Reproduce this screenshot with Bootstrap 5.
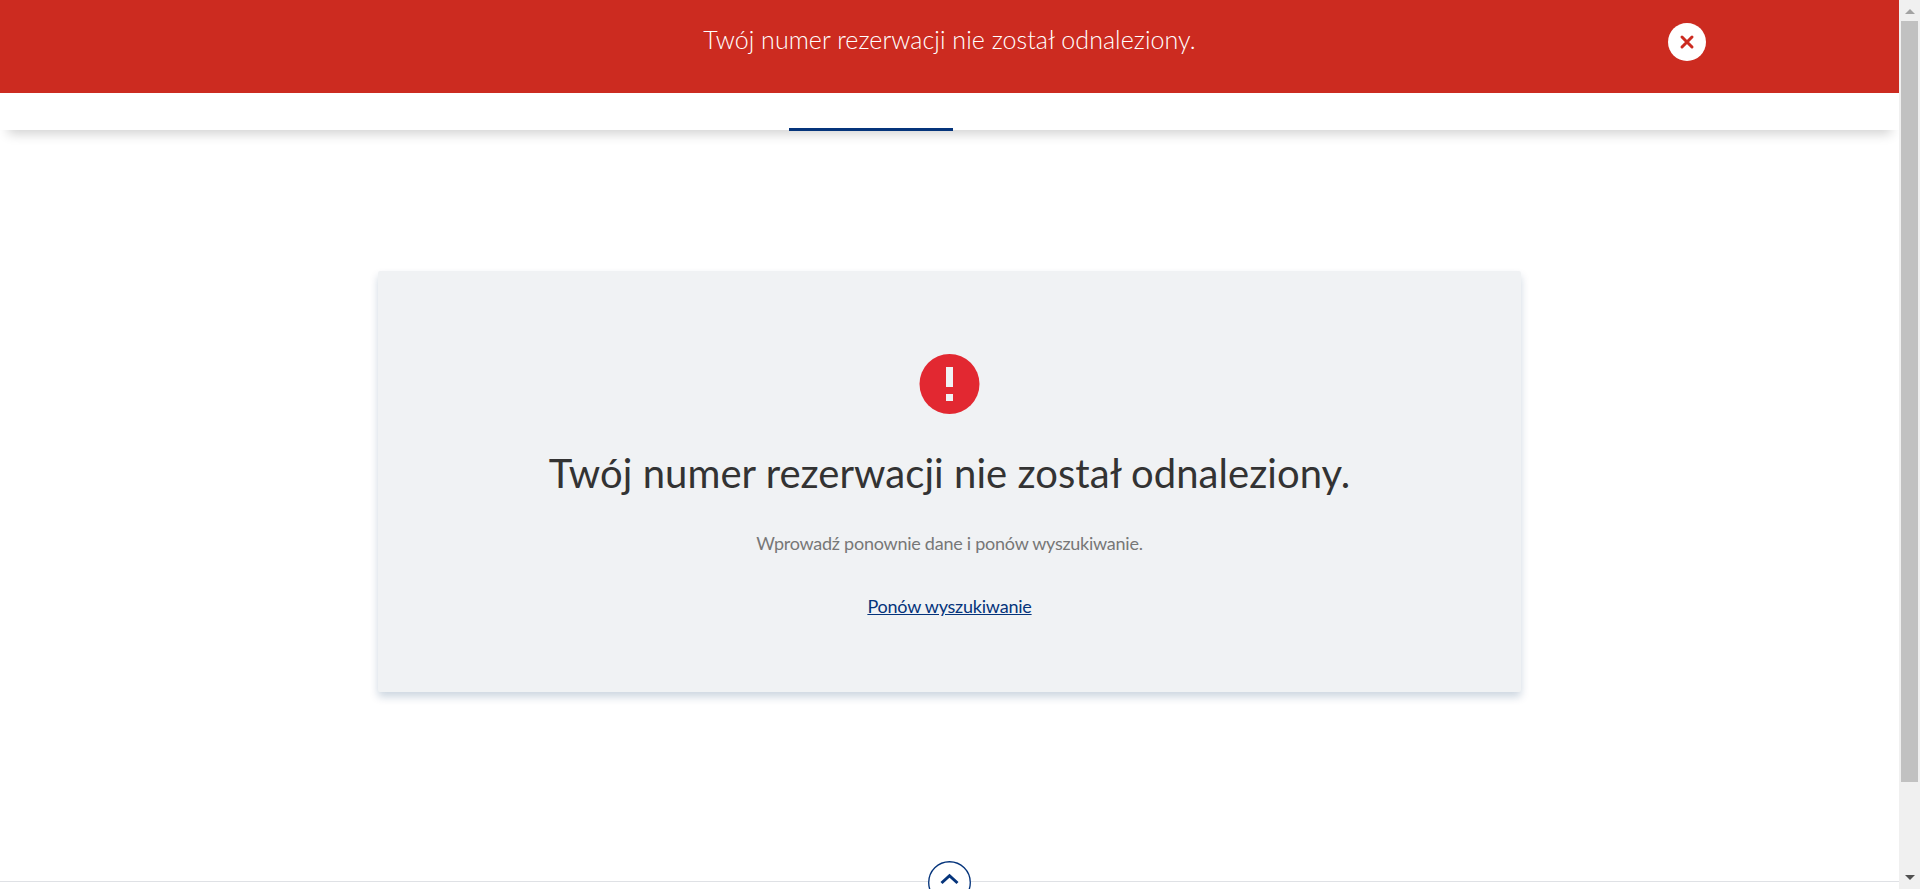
<!DOCTYPE html>
<html lang="pl">
<head>
<meta charset="utf-8">
<meta name="viewport" content="width=device-width, initial-scale=1">
<title>Rezerwacja</title>
<link href="https://cdn.jsdelivr.net/npm/bootstrap@5.3.0/dist/css/bootstrap.min.css" rel="stylesheet">
<style>
  body { font-family: Lato, "Liberation Sans", sans-serif; background: #fff; }
  .alert-bar { height: 93px; background: #cc2b20; color: #fff; padding-top: 21px; }
  .alert-text { font-size: 25px; line-height: 36px; font-weight: 300; letter-spacing: .05px; }
  .close-btn { width: 38px; height: 38px; top: 23px; right: 193px; }
  .tabs-bar { height: 37px; box-shadow: 0 12px 12px -8px rgba(0,0,0,.18); padding-right: 157px; }
  .tab-line { width: 164px; height: 3px; margin-bottom: -1px; background: #05347b; }
  .error-card { width: 1143px; height: 421px; margin-top: 141px; padding-top: 83px; background: #f0f2f4; border-radius: 2px; box-shadow: 0 5px 9px rgba(5,52,100,.2); }
  .error-title { font-size: 40px; line-height: 48px; color: #333; margin: 35px 0 0; font-weight: 400; letter-spacing: .05px; }
  .error-hint { font-size: 18px; line-height: 24px; color: #777; margin: 34px 0 0; letter-spacing: -.25px; }
  .retry { font-size: 18px; line-height: 24px; color: #05347b; margin-top: 39px; letter-spacing: -.22px; }
  .page-foot { height: 8px; border-top: 1px solid #dfe1e5; }
  .to-top { width: 43px; height: 43px; top: -21px; left: 928px; }
  .scroll-rail { width: 21px; background: #f0f0f0; padding: 9px 0; }
  .scroll-thumb { width: 17px; height: 761px; background: #c1c1c1; margin-top: 7px; }
</style>
</head>
<body>
<div class="d-flex vh-100 overflow-hidden">
  <div class="d-flex flex-column flex-grow-1 overflow-hidden">
    <header class="alert-bar position-relative text-center flex-shrink-0">
      <div class="alert-text">Twój numer rezerwacji nie został odnaleziony.</div>
      <button class="close-btn btn p-0 border-0 bg-white rounded-circle position-absolute d-flex" aria-label="Zamknij">
        <svg width="38" height="38" viewBox="0 0 38 38"><path d="M14 14l10 10M24 14L14 24" stroke="#cc2b20" stroke-width="3" stroke-linecap="round"/></svg>
      </button>
    </header>
    <nav class="tabs-bar d-flex justify-content-center align-items-end flex-shrink-0"><div class="tab-line"></div></nav>
    <main class="error-card mx-auto d-flex flex-column align-items-center flex-shrink-0">
      <svg class="flex-shrink-0" width="61" height="60" viewBox="0 0 61 60"><circle cx="30.5" cy="30" r="30" fill="#e22831"/><path d="M27 13h7v20h-7zM27 40h7v7h-7z" fill="#f0f2f4"/></svg>
      <h1 class="error-title">Twój numer rezerwacji nie został odnaleziony.</h1>
      <p class="error-hint">Wprowadź ponownie dane i ponów wyszukiwanie.</p>
      <a class="retry" href="#">Ponów wyszukiwanie</a>
    </main>
    <footer class="page-foot position-relative mt-auto flex-shrink-0">
      <a class="to-top position-absolute" href="#" aria-label="Do góry">
        <svg class="d-block" width="43" height="43" viewBox="0 0 43 43" fill="none"><circle cx="21.5" cy="21.5" r="20.8" fill="#fff" stroke="#05347b" stroke-width="1.35"/><path d="M13.5 22l8-7.3 8 7.3" stroke="#05347b" stroke-width="3"/></svg>
      </a>
    </footer>
  </div>
  <div class="scroll-rail d-flex flex-column align-items-center flex-shrink-0">
    <svg width="10" height="5" viewBox="0 0 10 5"><path d="M0 5L5 0l5 5z" fill="#a3a3a3"/></svg>
    <div class="scroll-thumb"></div>
    <svg class="mt-auto" width="10" height="5" viewBox="0 0 10 5"><path d="M0 0h10L5 5z" fill="#505050"/></svg>
  </div>
</div>
<script src="https://cdn.jsdelivr.net/npm/bootstrap@5.3.0/dist/js/bootstrap.bundle.min.js"></script>
</body>
</html>
